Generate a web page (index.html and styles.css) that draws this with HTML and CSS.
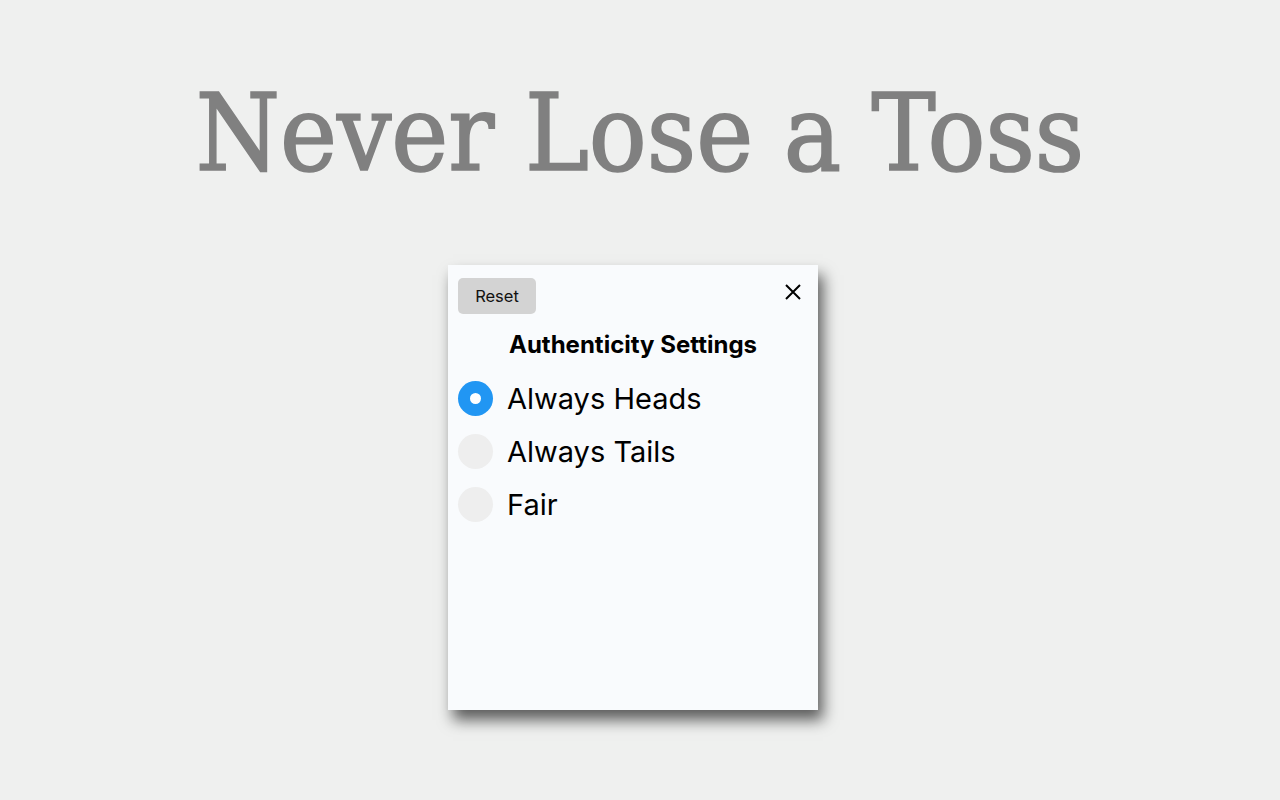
FILE: index.html
```html
<!DOCTYPE html>
<html lang="en">
<head>
    <meta charset="UTF-8">
    <meta name="viewport" content="width=device-width, initial-scale=1.0">
    <title>Never Lose a Toss</title>
    <link rel="stylesheet" href="styles.css">
</head>
<body>
    <h1 class="title">Never Lose a Toss</h1>

    <!-- settings popup -->
    <div class="settings">
        <div class="settings-top">
            <button class="reset">Reset</button>
            <svg class="close" width="18" height="18" viewBox="0 0 18 18">
                <path d="M2 2 L16 16 M16 2 L2 16" stroke="#000" stroke-width="2" fill="none"/>
            </svg>
        </div>
        <h2 class="settings-title">Authenticity Settings</h2>

        <label class="option">
            <input type="radio" name="mode" checked>
            <span class="dot"></span>
            <span class="option-text">Always Heads</span>
        </label>
        <label class="option">
            <input type="radio" name="mode">
            <span class="dot"></span>
            <span class="option-text">Always Tails</span>
        </label>
        <label class="option">
            <input type="radio" name="mode">
            <span class="dot"></span>
            <span class="option-text">Fair</span>
        </label>
    </div>
</body>
</html>
```
FILE: styles.css
```css
body {
    margin: 0;
    padding: 0;
    background-color: #eff0ef;
    font-family: Inter, "Noto Sans", sans-serif;
    display: flex;
    flex-direction: column;
    align-items: center;
    min-height: 800px;
}

.title {
    font-family: "DejaVu Serif Condensed", "Liberation Serif", serif;
    font-weight: normal;
    font-size: 107px;
    color: #808080;
    -webkit-text-stroke: 1.7px #808080;
    margin: 71px 0 0 0;
    line-height: 124px;
}

/* popup card */
.settings {
    width: 350px;
    height: 425px;
    margin-top: 70px;
    margin-right: 14px;
    padding: 10px;
    background-color: #f9fbfd;
    box-shadow: 5px 10px 14px rgba(0, 0, 0, 0.62);
}

.settings-top {
    display: flex;
    justify-content: space-between;
    align-items: flex-start;
    padding-top: 3px;
}

.reset {
    font-family: Inter, sans-serif;
    font-size: 16.5px;
    background-color: #d3d3d3;
    color: #111;
    border: none;
    border-radius: 5px;
    width: 78px;
    height: 36px;
    padding: 0;
}

.close {
    margin-right: 6px;
    margin-top: 5px;
}

.settings-title {
    text-align: center;
    font-size: 24px;
    font-weight: bold;
    margin: 16px 0 21px 0;
    line-height: 30px;
}

.option {
    display: flex;
    align-items: center;
    height: 35px;
    margin-bottom: 18px;
    font-size: 29px;
    cursor: pointer;
}

.option input {
    display: none;
}

.dot {
    width: 35px;
    height: 35px;
    border-radius: 50%;
    background-color: #eee;
    margin-right: 14px;
    position: relative;
}

.option input:checked + .dot {
    background-color: #2196f3;
}

.option input:checked + .dot::after {
    content: "";
    position: absolute;
    left: 12px;
    top: 12px;
    width: 11px;
    height: 11px;
    border-radius: 50%;
    background-color: white;
}
```
